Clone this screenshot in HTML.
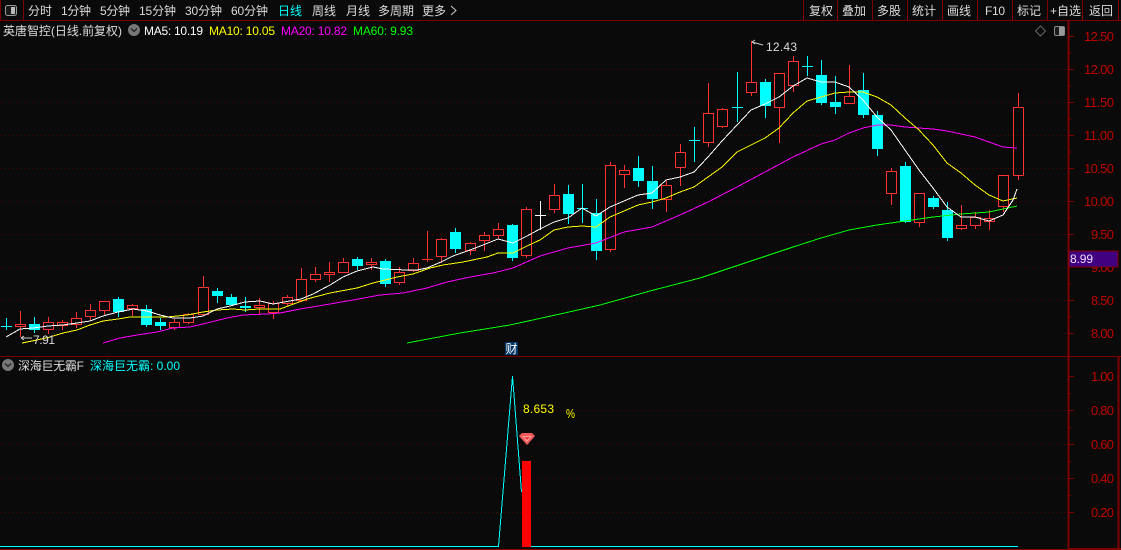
<!DOCTYPE html>
<html><head><meta charset="utf-8"><style>
html,body{margin:0;padding:0;background:#0a0a0a;overflow:hidden}
svg{display:block}
text{font-family:"Liberation Sans","WenQuanYi Zen Hei","Noto Sans CJK SC",sans-serif;font-size:12px}
.t{fill:#dcdcdc;font-size:12px}
.a{fill:#c00000;font-size:13px}
</style></head><body>
<svg width="1121" height="550" viewBox="0 0 1121 550" xmlns="http://www.w3.org/2000/svg">
<rect width="1121" height="550" fill="#0a0a0a"/>
<!-- grid -->
<g stroke="#560000" stroke-width="1" stroke-dasharray="1 3" shape-rendering="crispEdges">
<path d="M0 69.5H1068M0 102.5H1068M0 135.5H1068M0 168.5H1068M0 201.5H1068M0 234.5H1068M0 267.5H1068M0 300.5H1068M0 410.5H1068M0 444.5H1068M0 478.5H1068M0 512.5H1068"/>
</g>
<!-- frame -->
<g stroke="#800000" fill="none" shape-rendering="crispEdges">
<path d="M0 20.5H1121" stroke-width="1"/>
<path d="M0 356.5H1121" stroke-width="1"/>
<path d="M1068.5 20V550" stroke-width="2"/>
<path d="M1118.5 356V550M1068 549H1121" stroke-width="2"/>
<path d="M0 549.5H1068" stroke-width="1"/>
<path d="M0.5 0V20M23.5 0V20M803.5 0V20M837.5 0V20M872.5 0V20M907.5 0V20M942.5 0V20M977.5 0V20M1012.5 0V20M1047.5 0V20M1082.5 0V20M1118.5 0V20" stroke-width="1"/>
<path d="M1068 36.5h6M1068 69.5h6M1068 102.5h6M1068 135.5h6M1068 168.5h6M1068 201.5h6M1068 234.5h6M1068 300.5h6M1068 333.5h6M1068 53h3M1068 86h3M1068 119h3M1068 152h3M1068 185h3M1068 218h3M1068 284h3M1068 317h3M1068 376.5h6M1068 410.5h6M1068 444.5h6M1068 478.5h6M1068 512.5h6M1068 393.5h3M1068 427.5h3M1068 461.5h3M1068 495.5h3"/>
</g>
<!-- toolbar icon -->
<rect x="5.5" y="5.5" width="11" height="10" rx="2" fill="#1a1a1a" stroke="#999"/>
<rect x="11" y="7" width="4" height="7" fill="#bbb"/>
<!-- toolbar -->
<g class="t">
<text class="t" x="28" y="15">分时</text>
<text class="t" x="61" y="15" textLength="30">1分钟</text>
<text class="t" x="100" y="15" textLength="30">5分钟</text>
<text class="t" x="139" y="15" textLength="37">15分钟</text>
<text class="t" x="185" y="15" textLength="37">30分钟</text>
<text class="t" x="231" y="15" textLength="37">60分钟</text>
<text x="278" y="15" style="fill:#00ffff">日线</text>
<text class="t" x="312" y="15">周线</text>
<text class="t" x="346" y="15">月线</text>
<text class="t" x="378" y="15">多周期</text>
<text class="t" x="422" y="15">更多</text>
<path d="M451 6l5 4.5-5 4.5" fill="none" stroke="#ccc"/>
<text class="t" x="809" y="15">复权</text>
<text class="t" x="842" y="15">叠加</text>
<text class="t" x="877" y="15">多股</text>
<text class="t" x="912" y="15">统计</text>
<text class="t" x="947" y="15">画线</text>
<text class="t" x="985" y="15" textLength="20">F10</text>
<text class="t" x="1017" y="15">标记</text>
<text class="t" x="1050" y="15" textLength="31">+自选</text>
<text class="t" x="1089" y="15">返回</text>
</g>
<!-- title -->
<text x="3" y="35" style="fill:#dcdcdc" textLength="119">英唐智控(日线.前复权)</text>
<circle cx="134" cy="30" r="6" fill="#777"/>
<path d="M131 28.5l3 3 3-3" stroke="#222" stroke-width="1.3" fill="none"/>
<text x="144" y="35" fill="#ffffff" textLength="59">MA5: 10.19</text>
<text x="209" y="35" fill="#ffff00" textLength="66">MA10: 10.05</text>
<text x="281" y="35" fill="#ff00ff" textLength="66">MA20: 10.82</text>
<text x="353" y="35" fill="#00ff00" textLength="60">MA60: 9.93</text>
<path d="M1040.5 26l5 5-5 5-5-5z" fill="none" stroke="#666"/>
<rect x="1054.5" y="26.5" width="10" height="9" rx="1.5" fill="#1a1a1a" stroke="#888"/>
<rect x="1059" y="27" width="5" height="8" fill="#999"/>
<!-- axis labels -->
<text class="a" x="1084" y="41" textLength="30">12.50</text>
<text class="a" x="1084" y="74" textLength="30">12.00</text>
<text class="a" x="1084" y="107" textLength="30">11.50</text>
<text class="a" x="1084" y="140" textLength="30">11.00</text>
<text class="a" x="1084" y="173" textLength="30">10.50</text>
<text class="a" x="1084" y="206" textLength="30">10.00</text>
<text class="a" x="1091" y="239" textLength="23">9.50</text>
<text class="a" x="1091" y="272" textLength="23">9.00</text>
<text class="a" x="1091" y="305" textLength="23">8.50</text>
<text class="a" x="1091" y="338" textLength="23">8.00</text>
<rect x="1069" y="251" width="49" height="16" fill="#400080" stroke="#800000"/>
<text x="1070" y="263" fill="#eeddff" textLength="23">8.99</text>
<text class="a" x="1091" y="381" textLength="23">1.00</text>
<text class="a" x="1091" y="415" textLength="23">0.80</text>
<text class="a" x="1091" y="449" textLength="23">0.60</text>
<text class="a" x="1091" y="483" textLength="23">0.40</text>
<text class="a" x="1091" y="517" textLength="23">0.20</text>
<!-- cyan candles -->
<g shape-rendering="crispEdges">
<path fill="#00ffff" d="M29 324h11v6h-11zM113 299h11v13h-11zM141 309h11v16h-11zM155 322h11v4h-11zM212 291h11v5h-11zM226 297h11v8h-11zM240 306h11v2h-11zM352 259h11v7h-11zM380 261h11v23h-11zM450 232h11v17h-11zM507 225h11v33h-11zM563 194h11v20h-11zM591 213h11v38h-11zM633 168h11v13h-11zM647 181h11v18h-11zM760 82h11v24h-11zM816 75h11v28h-11zM830 102h11v5h-11zM858 90h11v25h-11zM872 115h11v34h-11zM900 166h11v56h-11zM928 198h11v9h-11zM942 210h11v28h-11z"/>
<path fill="none" stroke="#00ffff" d="M34.5 317V324M34.5 330V333M118.5 297V299M118.5 312V317M146.5 305V309M146.5 325V327M160.5 318V322M160.5 326V330M217.5 288V291M217.5 296V303M231.5 294V297M231.5 305V306M245.5 297V306M245.5 308V312M357.5 257V259M357.5 266V270M385.5 259V261M385.5 284V287M455.5 228V232M455.5 249V253M512.5 224V225M512.5 258V261M568.5 185V194M568.5 214V224M596.5 199V213M596.5 251V260M638.5 156V168M638.5 181V187M652.5 166V181M652.5 199V209M765.5 79V82M765.5 106V118M821.5 60V75M821.5 103V105M835.5 76V102M835.5 107V114M863.5 73V90M863.5 115V118M877.5 111V115M877.5 149V156M905.5 162V166M905.5 222V223M933.5 196V198M933.5 207V209M947.5 202V210M947.5 238V241
M6.5 318V330M1 326.5H12M582.5 184V223M577 208.5H588M694.5 127V162M689 140.5H700M737.5 72V122M732 107.5H743M807.5 56V76M802 66.5H813"/>
<!-- white doji -->
<path fill="none" stroke="#ffffff" d="M540.5 201V230M535 215.5H546"/>
<!-- red candles -->
<path fill="none" stroke="#ff3232" d="M15.5 324.5h10v2h-10zM43.5 322.5h10v7h-10zM57.5 322.5h10v3h-10zM71.5 318.5h10v6h-10zM85.5 310.5h10v6h-10zM99.5 301.5h10v9h-10zM127.5 305.5h10v3h-10zM169.5 322.5h10v5h-10zM183.5 314.5h10v8h-10zM198.5 287.5h10v27h-10zM254.5 305.5h10v2h-10zM268.5 303.5h10v9h-10zM282.5 297.5h10v6h-10zM296.5 279.5h10v21h-10zM310.5 274.5h10v5h-10zM324.5 272.5h10v2h-10zM338.5 262.5h10v10h-10zM366.5 262.5h10v2h-10zM394.5 272.5h10v10h-10zM408.5 263.5h10v7h-10zM436.5 239.5h10v17h-10zM465.5 243.5h10v7h-10zM479.5 235.5h10v5h-10zM493.5 229.5h10v6h-10zM521.5 209.5h10v46h-10zM549.5 195.5h10v14h-10zM605.5 165.5h10v84h-10zM619.5 170.5h10v4h-10zM661.5 185.5h10v14h-10zM675.5 152.5h10v15h-10zM703.5 113.5h10v29h-10zM717.5 109.5h10v17h-10zM746.5 82.5h10v10h-10zM774.5 73.5h10v34h-10zM788.5 61.5h10v24h-10zM844.5 96.5h10v7h-10zM886.5 171.5h10v22h-10zM914.5 193.5h10v29h-10zM956.5 225.5h10v3h-10zM970.5 217.5h10v8h-10zM984.5 218.5h10v3h-10zM998.5 175.5h10v31h-10zM1013.5 107.5h10v68h-10z
M20.5 311V324M20.5 327V337M48.5 317V322M48.5 330V334M62.5 320V322M62.5 325V330M76.5 312V318M76.5 325V328M90.5 304V310M90.5 317V321M104.5 311V315M132.5 304V305M132.5 309V316M174.5 319V322M174.5 328V330M188.5 313V314M188.5 323V324M203.5 276V287M203.5 315V316M259.5 298V305M259.5 308V314M273.5 301V303M273.5 313V319M287.5 295V297M287.5 304V306M301.5 268V279M301.5 301V302M315.5 267V274M315.5 280V282M329.5 262V272M329.5 275V282M343.5 258V262M371.5 258V262M371.5 265V270M399.5 267V272M399.5 283V285M413.5 258V263M413.5 271V272M427.5 231V262M422 259.5H433M441.5 238V239M441.5 257V263M470.5 242V243M470.5 251V255M484.5 232V235M484.5 241V251M498.5 223V229M498.5 236V239M526.5 207V209M526.5 256V258M554.5 184V195M554.5 210V213M610.5 162V165M610.5 250V252M624.5 165V170M624.5 175V188M666.5 181V185M666.5 200V212M680.5 144V152M680.5 168V186M708.5 83V113M708.5 143V147M722.5 108V109M722.5 127V128M751.5 41V82M751.5 93V96M779.5 108V143M793.5 56V61M793.5 86V92M849.5 65V96M891.5 168V171M891.5 194V205M919.5 223V227M961.5 205V225M961.5 229V230M975.5 212V217M975.5 226V229M989.5 210V218M989.5 222V230M1003.5 207V212M1018.5 93V107M1018.5 176V180"/>
</g>
<!-- MA lines -->
<g fill="none" stroke-width="1" shape-rendering="crispEdges">
<polyline stroke="#ff00ff" points="103,343 120,338 137,335 157,332 173,328 190,327 207,323 227,318 243,315 267,314 280,313 300,309 330,304 353,300 380,295 403,293 427,288 447,282 470,277 493,273 513,268 540,256 568,248 596,243 624,232 652,227 680,215 708,202 737,187 765,172 793,157 821,144 835,140 849,133 863,128 877,125 891,125 905,127 919,128 933,129 947,131 961,134 975,137 989,142 1003,147 1017,148"/>
<polyline stroke="#00ff00" points="407,343 460,333 510,325 560,314 600,305 650,291 700,278 757,259 793,247 821,238 849,230 877,225 905,221 933,217 961,214 989,212 1017,206"/>
<polyline stroke="#ffff00" points="22,343 37,340 50,337 63,333 77,330 90,325 103,321 118,319 130,317 167,317 187,315 203,312 217,310 233,309 245,310 259,309 280,309 307,299 330,293 357,288 373,283 397,277 413,274 430,268 443,265 463,262 487,257 498,253 513,253 527,246 540,240 554,230 568,227 582,226 596,227 610,217 624,211 638,205 652,202 666,198 680,192 694,187 708,177 722,167 737,152 751,145 765,138 779,128 793,113 807,101 821,97 835,93 849,92 863,92 877,97 891,105 905,118 919,130 933,145 947,163 961,173 975,185 989,195 1003,201 1017,198"/>
<polyline stroke="#ffffff" points="6,337 13,333 20,329 33,328 48,326 63,325 77,323 90,321 103,316 118,312 133,309 147,311 160,315 173,318 190,318 203,316 217,309 230,306 245,302 260,301 273,304 301,299 313,294 330,285 343,277 357,271 373,267 383,269 407,270 417,270 427,268 441,262 453,256 470,250 483,245 498,239 513,243 527,236 540,229 554,222 568,218 582,208 596,216 610,207 624,201 638,195 652,193 666,180 680,177 694,172 708,157 722,141 737,125 751,110 765,104 779,97 793,86 807,78 821,82 835,82 849,87 863,100 877,117 891,130 905,150 919,170 933,188 947,207 961,217 975,217 989,221 1003,215 1013,200 1017,189"/>
</g>
<!-- high/low markers -->
<path d="M752 42l11 3M752 42l3-2M752 42l3 2" stroke="#cccccc" fill="none"/>
<text x="766" y="51" fill="#dcdcdc" textLength="31">12.43</text>
<path d="M21 338h11M21 338l3-2M21 338l3 2" stroke="#cccccc" fill="none"/>
<text x="33" y="344" fill="#dcdcdc" textLength="22">7.91</text>
<!-- 财 -->
<rect x="505" y="342" width="13" height="13" fill="#003466"/>
<text x="505.5" y="353" fill="#ffffff">财</text>
<!-- lower title -->
<circle cx="8" cy="365" r="6" fill="#777"/>
<path d="M5 363.5l3 3 3-3" stroke="#222" stroke-width="1.3" fill="none"/>
<text x="18" y="370" fill="#dcdcdc" textLength="66">深海巨无霸F</text>
<text x="90" y="370" fill="#00ffff" textLength="90">深海巨无霸: 0.00</text>
<!-- indicator -->
<path d="M0 546.5H498.5L512.5 376L521.5 492" fill="none" stroke="#00ffff" stroke-width="1" shape-rendering="crispEdges"/>
<path d="M531 546.5H1018" stroke="#00ffff" fill="none" shape-rendering="crispEdges"/>
<rect x="522" y="461" width="9" height="86" fill="#ff0000"/>
<text x="523" y="413" fill="#ffff00" textLength="31">8.653</text>
<text x="566" y="418" fill="#ffff00" textLength="9" lengthAdjust="spacingAndGlyphs" style="font-size:13px">%</text>
<path d="M519 436l3-3h10l3 3-8 9z" fill="#f05a5a"/>
<path d="M522 436h10l-5 6z" fill="#ff9c9c"/>
<path d="M524 437h6l-3 3z" fill="#e84040"/>
</svg>
</body></html>
